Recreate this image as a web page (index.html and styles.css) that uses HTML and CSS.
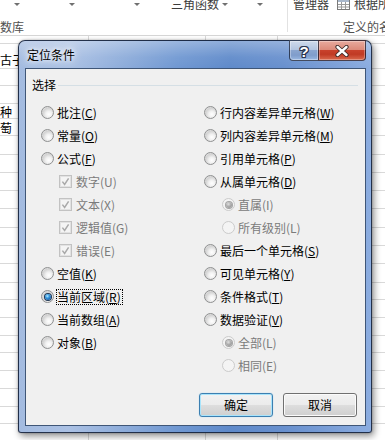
FILE: index.html
```html
<!DOCTYPE html>
<html lang="zh-CN">
<head>
<meta charset="utf-8">
<title>定位条件</title>
<link rel="stylesheet" href="styles.css">
</head>
<body>
<div class="ribbon">
  <div class="rgroup g1">
    <div class="rrow top">
      <i class="arr m14"></i><i class="arr m50"></i><i class="arr m60"></i>
      <span class="rtext m31">三角函数</span><i class="arr m3"></i><i class="arr m29"></i>
    </div>
    <div class="rrow bottom"><span class="rlabel">数库</span></div>
  </div>
  <div class="rsep"></div>
  <div class="rgroup g2">
    <div class="rrow top">
      <span class="rtext m5">管理器</span>
      <svg class="ricon" width="13" height="11" viewBox="0 0 13 11"><rect x="0.5" y="0.5" width="12" height="10" fill="#fff" stroke="#7a7a7a"/><rect x="1" y="1" width="11" height="2" fill="#a9b8cc"/><path d="M4.5 3v7M8.5 3v7M1 5.5h11M1 8h11" stroke="#9a9a9a" stroke-width="1"/></svg>
      <span class="rtext m4">根据所选内容创建</span>
    </div>
    <div class="rrow bottom"><span class="rlabel m55">定义的名称</span></div>
  </div>
</div>

<div class="sheet">
  <div class="row t8"></div>
  <div class="row t25 bottomtext"><span class="cell">古子</span></div>
  <div class="row t17"></div>
  <div class="row t18"></div>
  <div class="row t15"><span class="cell">种</span></div>
  <div class="row t17"><span class="cell">萄</span></div>
  <div class="row t19"></div>
  <div class="row t18"></div>
  <div class="row t18"></div>
  <div class="row t18"></div>
  <div class="row t19"></div>
  <div class="row t18"></div>
  <div class="row t18"></div>
  <div class="row t19"></div>
  <div class="row t17"></div>
  <div class="row t18"></div>
  <div class="row t18"></div>
  <div class="row t17"></div>
  <div class="row t18"></div>
  <div class="row t18"></div>
  <div class="row t18"></div>
  <div class="row t17"></div>
  <div class="row t18"></div>
</div>

<div class="dialog">
  <div class="titlebar">
    <span class="title">定位条件</span>
    <div class="caption">
      <div class="cbtn help"><span class="q">?</span></div>
      <div class="cbtn close">
        <svg width="14" height="12" viewBox="0 0 14 12"><path d="M2.5 2 L11.5 10 M11.5 2 L2.5 10" stroke="#3a2a28" stroke-width="4.2" stroke-linecap="round"/><path d="M2.5 2 L11.5 10 M11.5 2 L2.5 10" stroke="#fff" stroke-width="2.4" stroke-linecap="round"/></svg>
      </div>
    </div>
  </div>
  <div class="frame">
    <div class="client">
      <div class="legend"><span class="ltext">选择</span><i class="gline"></i></div>
      <div class="cols">
        <div class="col">
          <div class="opt"><i class="radio"></i><span class="lbl">批注(<u>C</u>)</span></div>
          <div class="opt"><i class="radio"></i><span class="lbl">常量(<u>O</u>)</span></div>
          <div class="opt"><i class="radio"></i><span class="lbl">公式(<u>F</u>)</span></div>
          <div class="opt sub dis"><svg class="check" width="13" height="13" viewBox="0 0 13 13"><rect x="0.5" y="0.5" width="12" height="12" fill="#f4f4f4" stroke="#c2c2c2"/><rect x="1.5" y="1.5" width="10" height="10" fill="none" stroke="#e2e2e2"/><path d="M3.4 6.6 L5.6 9.4 L9.6 3.4" fill="none" stroke="#a9a9a9" stroke-width="1.5"/></svg><span class="lbl">数字(U)</span></div>
          <div class="opt sub dis"><svg class="check" width="13" height="13" viewBox="0 0 13 13"><rect x="0.5" y="0.5" width="12" height="12" fill="#f4f4f4" stroke="#c2c2c2"/><rect x="1.5" y="1.5" width="10" height="10" fill="none" stroke="#e2e2e2"/><path d="M3.4 6.6 L5.6 9.4 L9.6 3.4" fill="none" stroke="#a9a9a9" stroke-width="1.5"/></svg><span class="lbl">文本(X)</span></div>
          <div class="opt sub dis"><svg class="check" width="13" height="13" viewBox="0 0 13 13"><rect x="0.5" y="0.5" width="12" height="12" fill="#f4f4f4" stroke="#c2c2c2"/><rect x="1.5" y="1.5" width="10" height="10" fill="none" stroke="#e2e2e2"/><path d="M3.4 6.6 L5.6 9.4 L9.6 3.4" fill="none" stroke="#a9a9a9" stroke-width="1.5"/></svg><span class="lbl">逻辑值(G)</span></div>
          <div class="opt sub dis"><svg class="check" width="13" height="13" viewBox="0 0 13 13"><rect x="0.5" y="0.5" width="12" height="12" fill="#f4f4f4" stroke="#c2c2c2"/><rect x="1.5" y="1.5" width="10" height="10" fill="none" stroke="#e2e2e2"/><path d="M3.4 6.6 L5.6 9.4 L9.6 3.4" fill="none" stroke="#a9a9a9" stroke-width="1.5"/></svg><span class="lbl">错误(E)</span></div>
          <div class="opt"><i class="radio"></i><span class="lbl">空值(<u>K</u>)</span></div>
          <div class="opt"><i class="radio on"></i><span class="lbl focus">当前区域(<u>R</u>)</span></div>
          <div class="opt"><i class="radio"></i><span class="lbl">当前数组(<u>A</u>)</span></div>
          <div class="opt"><i class="radio"></i><span class="lbl">对象(<u>B</u>)</span></div>
        </div>
        <div class="col">
          <div class="opt"><i class="radio"></i><span class="lbl">行内容差异单元格(<u>W</u>)</span></div>
          <div class="opt"><i class="radio"></i><span class="lbl">列内容差异单元格(<u>M</u>)</span></div>
          <div class="opt"><i class="radio"></i><span class="lbl">引用单元格(<u>P</u>)</span></div>
          <div class="opt"><i class="radio"></i><span class="lbl">从属单元格(<u>D</u>)</span></div>
          <div class="opt sub dis"><i class="radio off on"></i><span class="lbl">直属(I)</span></div>
          <div class="opt sub dis"><i class="radio off"></i><span class="lbl">所有级别(L)</span></div>
          <div class="opt"><i class="radio"></i><span class="lbl">最后一个单元格(<u>S</u>)</span></div>
          <div class="opt"><i class="radio"></i><span class="lbl">可见单元格(<u>Y</u>)</span></div>
          <div class="opt"><i class="radio"></i><span class="lbl">条件格式(<u>T</u>)</span></div>
          <div class="opt"><i class="radio"></i><span class="lbl">数据验证(<u>V</u>)</span></div>
          <div class="opt sub dis"><i class="radio off on"></i><span class="lbl">全部(L)</span></div>
          <div class="opt sub dis"><i class="radio off"></i><span class="lbl">相同(E)</span></div>
        </div>
      </div>
      <div class="actions">
        <button class="btn default">确定</button>
        <button class="btn">取消</button>
      </div>
    </div>
  </div>
</div>
</body>
</html>
```

FILE: styles.css
```css
* { box-sizing: border-box; margin: 0; padding: 0; }
html, body { width: 385px; height: 440px; overflow: hidden; }
body {
  position: relative;
  background: #fff;
  font-family: "Noto Sans CJK SC", "Microsoft YaHei", sans-serif;
  font-size: 12px;
  color: #000;
}

/* ---------- ribbon (background) ---------- */
.ribbon {
  height: 36px;
  display: flex;
  border-bottom: 1px solid #d6d6d6;
  overflow: hidden;
  background: #fff;
}
.rgroup { display: flex; flex-direction: column; }
.g1 { width: 287px; }
.g2 { flex: 1; min-width: 0; }
.rrow {
  display: flex;
  align-items: center;
  height: 14px;
  line-height: 14px;
  white-space: nowrap;
}
.rrow.top { margin-top: -3px; }
.rrow.bottom { margin-top: 9px; }
.arr {
  display: block;
  width: 0; height: 0;
  border-left: 3px solid transparent;
  border-right: 3px solid transparent;
  border-top: 3px solid #707070;
  flex: none;
}
.rtext { color: #3c3c3c; flex: none; }
.rlabel { color: #505050; flex: none; }
.ricon { flex: none; margin-left: 8px; }
.m3 { margin-left: 3px; }
.m4 { margin-left: 4px; }
.m5 { margin-left: 5px; }
.m14 { margin-left: 14px; }
.m29 { margin-left: 29px; }
.m31 { margin-left: 31px; }
.m50 { margin-left: 49px; }
.m55 { margin-left: 55px; }
.m60 { margin-left: 59px; }
.rsep { width: 1px; height: 32px; background: #e2e2e2; flex: none; }

/* ---------- sheet (background) ---------- */
.sheet {
  height: 404px;
  background:
    linear-gradient(#d9d9d9, #d9d9d9) 88px 0 / 1px 100% no-repeat,
    linear-gradient(#d9d9d9, #d9d9d9) 205px 0 / 1px 100% no-repeat,
    linear-gradient(#d9d9d9, #d9d9d9) 277px 0 / 1px 100% no-repeat,
    #fff;
}
.row {
  display: flex;
  align-items: center;
  border-bottom: 1px solid #d9d9d9;
  line-height: 13px;
  font-size: 12px;
}
.row.bottomtext { align-items: flex-end; padding-bottom: 2px; }
.cell { color: #000; }
.t8 { height: 8px; }
.t15 { height: 15px; }
.t17 { height: 17px; }
.t18 { height: 18px; }
.t19 { height: 19px; }
.t25 { height: 25px; }

/* ---------- dialog ---------- */
.dialog {
  position: absolute;
  left: 18px;
  top: 40px;
  width: 354px;
  height: 393px;
  border: 1px solid rgba(18, 30, 52, 0.88);
  border-radius: 7px 7px 3px 3px;
  background:
    linear-gradient(90deg, #a3bbe0 0%, #abc1e4 14%, #8dacda 30%, #7098d2 45%, #5f8aca 60%, #6890ce 75%, #7ca0d8 90%, #8cade0 100%);
  box-shadow: 2px 3px 7px rgba(0, 0, 0, 0.45), 0 0 2px rgba(0,0,0,.3);
  display: flex;
  flex-direction: column;
}
.titlebar {
  height: 27px;
  flex: none;
  display: flex;
  align-items: center;
  padding-left: 8px;
  border-radius: 6px 6px 0 0;
  background: linear-gradient(rgba(255,255,255,0.3), rgba(255,255,255,0.06) 60%, rgba(255,255,255,0));
}
.title {
  line-height: 14px;
  color: #000;
  text-shadow: 0 0 4px #fff, 0 0 8px rgba(255,255,255,.9), 0 0 12px rgba(255,255,255,.7);
}
.caption {
  margin-left: auto;
  margin-right: 5px;
  align-self: flex-start;
  margin-top: -1px;
  display: flex;
  height: 21px;
}
.cbtn {
  height: 21px;
  border: 1px solid rgba(20, 28, 48, 0.75);
  display: flex;
  align-items: center;
  justify-content: center;
}
.help {
  width: 29px;
  border-right: none;
  border-radius: 0 0 0 4px;
  background: linear-gradient(#cfdaec 0%, #b3c5e1 45%, #8aa5cf 50%, #7f9dcb 75%, #9ab8e2 100%);
  box-shadow: inset 0 0 0 1px rgba(255,255,255,.35);
}
.q {
  font-family: "Liberation Sans", sans-serif;
  font-weight: bold;
  font-size: 15px;
  line-height: 15px;
  color: #fff;
  margin-top: 1px;
  text-shadow: 1px 0 0 #2b3550, -1px 0 0 #2b3550, 0 1px 0 #2b3550, 0 -1px 0 #2b3550, 1px 1px 0 #2b3550, -1px -1px 0 #2b3550, 1px -1px 0 #2b3550, -1px 1px 0 #2b3550;
}
.close {
  width: 48px;
  border-radius: 0 0 4px 0;
  background: linear-gradient(#e8aa9e 0%, #dc8a7a 45%, #c8412b 50%, #c03a24 70%, #d9694d 100%);
  box-shadow: inset 0 0 0 1px rgba(255,255,255,.3);
}
.frame {
  flex: 1;
  padding: 0 5px 6px 6px;
  display: flex;
}
.client {
  flex: 1;
  border: 1px solid #3f5677;
  background: #f0f0f0;
  display: flex;
  flex-direction: column;
  padding-top: 6px;
}
.legend {
  height: 20px;
  display: flex;
  align-items: center;
  padding-left: 6px;
  padding-right: 7px;
}
.ltext { line-height: 14px; }
.gline {
  flex: 1;
  height: 1px;
  background: #d5dfe5;
  margin-left: 2px;
}
.cols {
  margin-top: 6px;
  display: grid;
  grid-template-columns: 163px 1fr;
  padding-left: 15px;
}
.col { display: flex; flex-direction: column; }
.opt {
  height: 23px;
  display: flex;
  align-items: center;
  white-space: nowrap;
}
.opt.sub { padding-left: 18px; }
.opt.dis .lbl { color: #7b7b7b; }
.lbl { line-height: 14px; }
.lbl u { text-decoration: underline; text-underline-offset: 1px; }
.lbl.focus {
  border: 1px dotted #000;
  margin-left: -1px;
  padding-right: 1px;
}
.radio {
  display: block;
  flex: none;
  width: 13px;
  height: 13px;
  border-radius: 50%;
  margin-right: 3px;
  border: 1px solid #8f9091;
  background: radial-gradient(circle at 62% 66%, #ffffff 0%, #f1f1f1 30%, #d2d2d2 62%, #e4e4e4 80%, #f4f4f4 100%);
  position: relative;
}
.radio.on::after {
  content: "";
  position: absolute;
  left: 2.5px;
  top: 2.5px;
  width: 6px;
  height: 6px;
  border-radius: 50%;
  background: radial-gradient(circle at 40% 35%, #b9ecff 0%, #3a9be0 35%, #165ea8 75%, #0e3f77 100%);
  box-shadow: 0 0 0 1px #1d3553;
}
.radio.off {
  border-color: #cbcbcb;
  background: #f4f4f4;
}
.radio.off.on::after {
  background: radial-gradient(circle at 40% 35%, #e0e0e0 0%, #a8a8a8 50%, #8d8d8d 100%);
  box-shadow: 0 0 0 1px #a4a4a4;
}
.check { display: block; flex: none; margin-right: 4px; }
.actions {
  margin-top: 16px;
  display: flex;
  justify-content: flex-end;
  gap: 10px;
  padding-right: 8px;
}
.btn {
  width: 74px;
  height: 24px;
  border: 1px solid #707070;
  border-radius: 3px;
  background: linear-gradient(#f2f2f2 0%, #ebebeb 48%, #dddddd 52%, #cfcfcf 100%);
  box-shadow: inset 0 0 0 1px #fbfbfb;
  font-family: "Noto Sans CJK SC", sans-serif;
  font-size: 12px;
  line-height: 14px;
  color: #000;
}
.btn.default {
  border-color: #3c7fb1;
  box-shadow: inset 0 0 0 1px #a9e4fb, 0 0 1px #7cc8f0;
}
```
